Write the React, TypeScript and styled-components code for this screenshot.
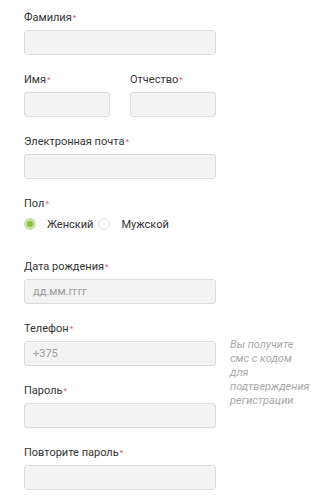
import styled, { createGlobalStyle } from 'styled-components';

const GlobalStyle = createGlobalStyle`
  html, body {
    margin: 0;
    padding: 0;
    background: #ffffff;
  }
  body {
    font-family: Roboto, 'Liberation Sans', sans-serif;
  }
`;

const App = () => {
  return (
    <>
      <GlobalStyle />
      <Form>
        <Field $main>
          <Label>Фамилия<Req>*</Req></Label>
          <Input />
        </Field>

        <Pair>
          <Field>
            <Label>Имя<Req>*</Req></Label>
            <Input />
          </Field>
          <Field>
            <Label>Отчество<Req>*</Req></Label>
            <Input />
          </Field>
        </Pair>

        <Field $main>
          <Label>Электронная почта<Req>*</Req></Label>
          <Input />
        </Field>

        <Field $main>
          <Label>Пол<Req>*</Req></Label>
          <RadioRow>
            <RadioItem>
              <Radio $checked />
              Женский
            </RadioItem>
            <RadioItem>
              <Radio />
              Мужской
            </RadioItem>
          </RadioRow>
        </Field>

        <Field $main>
          <Label>Дата рождения<Req>*</Req></Label>
          <Input placeholder="дд.мм.гггг" />
        </Field>

        <Field $main>
          <Label>Телефон<Req>*</Req></Label>
          <Input placeholder="+375" />
        </Field>
        <Hint>Вы получите смс с кодом для подтверждения регистрации</Hint>

        <Field $main>
          <Label>Пароль<Req>*</Req></Label>
          <Input type="password" />
        </Field>

        <Field $main>
          <Label>Повторите пароль<Req>*</Req></Label>
          <Input type="password" />
        </Field>
      </Form>
    </>
  );
};

export default App;

const Form = styled.div`
  display: grid;
  grid-template-columns: 192px 82px;
  column-gap: 14px;
  row-gap: 19px;
  padding: 12px 0 0 24px;
`;

const Field = styled.div<{ $main?: boolean }>`
  grid-column: ${(p) => (p.$main ? '1' : 'auto')};
  display: flex;
  flex-direction: column;
  gap: 6px;
`;

const Pair = styled.div`
  grid-column: 1;
  display: grid;
  grid-template-columns: 86px 86px;
  column-gap: 20px;
`;

const Label = styled.div`
  font-size: 11px;
  line-height: 12px;
  color: #333333;
`;

const Req = styled.span`
  color: #e0507a;
  font-size: 8px;
  vertical-align: 1px;
  margin-left: 1px;
`;

const Input = styled.input`
  box-sizing: border-box;
  width: 100%;
  height: 25px;
  margin: 0;
  padding: 0 8px;
  border: 1px solid #dcdcdc;
  border-radius: 3px;
  background: #f3f3f3;
  font-family: Roboto, 'Liberation Sans', sans-serif;
  font-size: 11px;
  color: #333333;
  outline: none;

  &::placeholder {
    color: #9a9a9a;
  }
`;

const RadioRow = styled.div`
  display: flex;
  align-items: center;
  gap: 5px;
  height: 16px;
  margin-bottom: 10px;
`;

const RadioItem = styled.label`
  display: flex;
  align-items: center;
  gap: 11px;
  font-size: 11px;
  color: #333333;
`;

const Radio = styled.span<{ $checked?: boolean }>`
  box-sizing: border-box;
  width: 12px;
  height: 12px;
  border-radius: 50%;
  border: ${(p) => (p.$checked ? '3px solid #c6e1a0' : '1px solid #dddddd')};
  background: ${(p) => (p.$checked ? '#86bd3c' : '#ffffff')};
`;

const Hint = styled.div`
  grid-column: 2;
  grid-row: span 2;
  padding-top: 15px;
  font-family: Roboto, 'Liberation Sans', sans-serif;
  font-style: italic;
  font-size: 11px;
  line-height: 14px;
  color: #a8a8a8;
`;
